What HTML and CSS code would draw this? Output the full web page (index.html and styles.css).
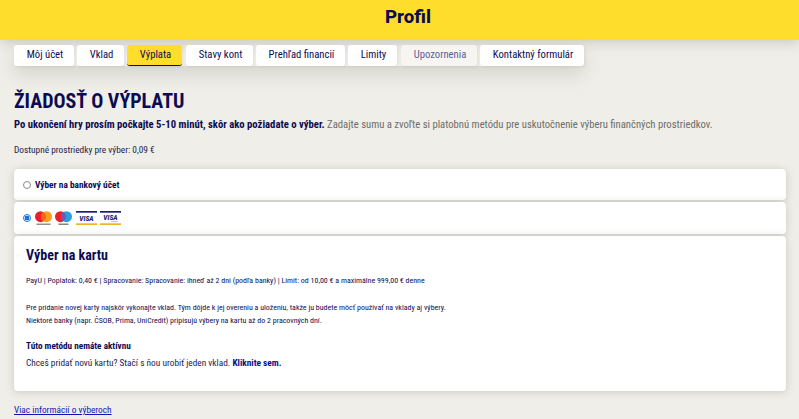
FILE: index.html
```html
<!DOCTYPE html>
<html lang="sk">
<head>
<meta charset="utf-8">
<title>Profil</title>
<link rel="stylesheet" href="styles.css">
</head>
<body>
<header class="top"><h1>Profil</h1></header>
<nav class="tabs">
  <a class="tab t1">Môj účet</a>
  <a class="tab t2">Vklad</a>
  <a class="tab t3 active">Výplata</a>
  <a class="tab t4">Stavy kont</a>
  <a class="tab t5">Prehľad financií</a>
  <a class="tab t6">Limity</a>
  <a class="tab t7 muted">Upozornenia</a>
  <a class="tab t8">Kontaktný formulár</a>
</nav>
<main class="content">
  <h2 class="title">Žiadosť o výplatu</h2>
  <p class="intro"><strong>Po ukončení hry prosím počkajte 5-10 minút, skôr ako požiadate o výber.</strong> <span>Zadajte sumu a zvoľte si platobnú metódu pre uskutočnenie výberu finančných prostriedkov.</span></p>
  <p class="avail">Dostupné prostriedky pre výber: 0,09 €</p>
  <div class="card row r1">
    <span class="radio"></span><b class="rowlabel">Výber na bankový účet</b>
  </div>
  <div class="card row r2">
    <span class="radio on"></span>
    <span class="logos">
      <svg class="mc" viewBox="0 0 17 14"><circle cx="5.5" cy="5.7" r="5.5" fill="#e8202a"/><circle cx="11.5" cy="5.7" r="5.5" fill="#f79e1b"/><path d="M8.5 1.1a5.5 5.5 0 0 1 0 9.2a5.5 5.5 0 0 1 0-9.2z" fill="#f2641f"/><rect x="1.5" y="12.6" width="14" height="1.2" fill="#777"/></svg>
      <svg class="mc" viewBox="0 0 17 14"><circle cx="5.5" cy="5.7" r="5.5" fill="#e8202a"/><circle cx="11.5" cy="5.7" r="5.5" fill="#2a9fe0"/><path d="M8.5 1.1a5.5 5.5 0 0 1 0 9.2a5.5 5.5 0 0 1 0-9.2z" fill="#6a5cb0"/><rect x="3.5" y="12.6" width="10" height="1.2" fill="#666"/></svg>
      <svg class="visa" viewBox="0 0 21 14"><rect width="21" height="14" fill="#fff"/><rect width="21" height="1.7" fill="#1a1f71"/><rect y="12.3" width="21" height="1.7" fill="#f0b429"/><text x="10.5" y="9.6" text-anchor="middle" class="visatext">VISA</text></svg>
      <svg class="visa" viewBox="0 0 21 14"><rect width="21" height="14" fill="#fff"/><rect width="21" height="1.7" fill="#1a1f71"/><rect y="12.3" width="21" height="1.7" fill="#f0b429"/><text x="10.5" y="8.6" text-anchor="middle" class="visatext">VISA</text><rect x="11" y="10" width="7" height="0.9" fill="#c4c4c4"/></svg>
    </span>
  </div>
  <section class="card detail">
    <h3>Výber na kartu</h3>
    <p class="small info">PayU | Poplatok: 0,40 € | Spracovanie: Spracovanie: ihneď až 2 dni (podľa banky) | Limit: od 10,00 € a maximálne 999,00 € denne</p>
    <p class="small note">Pre pridanie novej karty najskôr vykonajte vklad. Tým dôjde k jej overeniu a uloženiu, takže ju budete môcť používať na vklady aj výbery.<br>Niektoré banky (napr. ČSOB, Prima, UniCredit) pripisujú výbery na kartu až do 2 pracovných dní.</p>
    <h4>Túto metódu nemáte aktívnu</h4>
    <p class="add">Chceš pridať novú kartu? Stačí s ňou urobiť jeden vklad. <a>Kliknite sem.</a></p>
  </section>
  <a class="more" href="#">Viac informácií o výberoch</a>
</main>
</body>
</html>
```

FILE: styles.css
```css
* { box-sizing: border-box; }
html, body { margin: 0; padding: 0; }
body {
  width: 799px;
  height: 419px;
  overflow: hidden;
  background: #efeee8;
  color: #0c0b52;
  font-family: Roboto, "Liberation Sans", sans-serif;
  font-stretch: 75%;
}
.top {
  height: 40px;
  background: #ffdd2d;
  box-shadow: 0 2px 12px rgba(60, 60, 40, .22);
  display: flex;
  align-items: center;
  justify-content: center;
  padding: 0 0 6px 17px;
}
.top h1 {
  margin: 0;
  font-size: 18.67px;
  line-height: 24px;
  font-weight: 800;
  font-stretch: 100%;
  color: #0c0b52;
}
.tabs {
  display: flex;
  margin: 5px 0 0 14px;
  width: max-content;
  height: 21px;
  border-radius: 3px;
  box-shadow: 0 8px 18px rgba(60, 60, 40, .15);
}
.tab {
  display: flex;
  align-items: center;
  justify-content: center;
  height: 21px;
  margin-right: 3px;
  background: #fff;
  border-radius: 3px;
  box-shadow: 1px 1px 3px rgba(60, 60, 40, .08);
  font-size: 10.67px;
  color: #0c0b52;
  padding: 0 0 3px 2px;
}
.t1 { width: 60px; }
.t2 { width: 47px; }
.t3 { width: 55px; margin-right: 4px; }
.t4 { width: 67px; }
.t5 { width: 89px; }
.t6 { width: 49px; margin-right: 4px; }
.t7 { width: 76px; }
.t8 { width: 104px; margin-right: 0; }
.active { background: #ffdd2d; border-bottom: 1px solid #0c0b52; padding-bottom: 2px; }
.muted { background: #f6f5f1; color: #5f5e9a; }
.content { padding: 0 13px 0 14px; }
.title {
  margin: 23px 0 0;
  font-size: 20px;
  line-height: 24px;
  font-weight: 700;
  text-transform: uppercase;
}
.intro {
  margin: 4px 0 0;
  font-size: 10.67px;
  line-height: 16px;
  white-space: nowrap;
}
.intro span { color: #6e6d68; }
.avail {
  margin: 10px 0 0;
  font-size: 9.33px;
  line-height: 14px;
  color: #23224f;
}
.card {
  background: #fff;
  border-radius: 4px;
  box-shadow: 0 1px 8px rgba(60, 60, 40, .2);
}
.row {
  display: flex;
  align-items: center;
  padding-left: 9px;
}
.r1 { margin-top: 12px; height: 31px; }
.r2 { margin-top: 2px; height: 32px; }
.radio {
  width: 8px;
  height: 8px;
  border-radius: 50%;
  border: 1px solid #8a8a8a;
  flex: none;
}
.radio.on {
  border-color: #1a73d8;
  background: radial-gradient(circle, #1a73d8 0 2.2px, #fff 2.6px);
}
.rowlabel { margin-left: 4px; font-size: 9.33px; font-weight: 700; }
.logos { display: flex; align-items: center; margin-left: 4px; }
.mc { width: 17px; height: 14px; margin-right: 3px; display: block; }
.visa { width: 21px; height: 14px; display: block; margin-left: 3px; }
.mc + .visa { margin-left: 1px; }
.visatext { font: italic 900 6.5px Roboto, sans-serif; fill: #1a1f71; }
.detail {
  margin-top: 2px;
  height: 155px;
  padding: 9px 12px;
}
.detail h3 {
  margin: 0;
  font-size: 14px;
  line-height: 20px;
  font-weight: 700;
}
.small {
  margin: 0;
  font-size: 7.93px;
  line-height: 13px;
  opacity: .99;
}
.info { margin-top: 9px; }
.note { margin-top: 14px; }
.detail h4 {
  margin: 12px 0 0;
  font-size: 9.2px;
  line-height: 14px;
  font-weight: 700;
}
.add {
  margin: 3px 0 0;
  font-size: 9.33px;
  line-height: 14px;
  color: #23224f;
}
.add a { font-weight: 700; color: #0c0b8c; }
.more {
  display: block;
  margin-top: 12px;
  font-size: 9.33px;
  line-height: 14px;
  color: #1512b8;
  text-decoration: underline;
}
```
